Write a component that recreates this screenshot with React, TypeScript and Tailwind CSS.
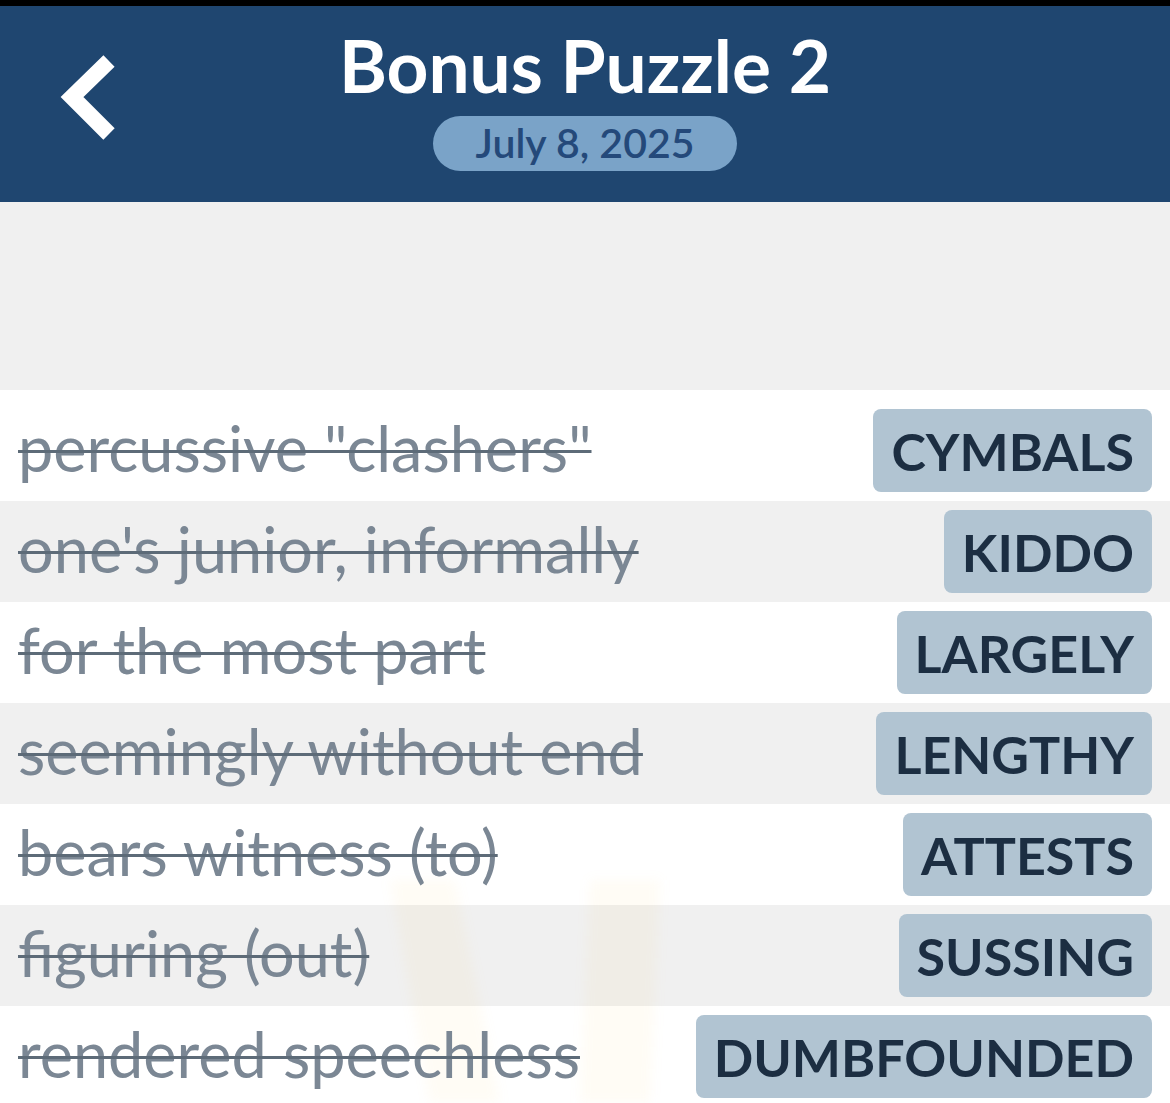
import React from "react";

const rows: { clue: string; answer: string }[] = [
  { clue: 'percussive "clashers"', answer: "CYMBALS" },
  { clue: "one's junior, informally", answer: "KIDDO" },
  { clue: "for the most part", answer: "LARGELY" },
  { clue: "seemingly without end", answer: "LENGTHY" },
  { clue: "bears witness (to)", answer: "ATTESTS" },
  { clue: "figuring (out)", answer: "SUSSING" },
  { clue: "rendered speechless", answer: "DUMBFOUNDED" },
];

export default function App() {
  return (
    <div
      className="relative w-[1170px] h-[1103px] overflow-hidden bg-white flex flex-col"
      style={{ fontFamily: "Lato, 'Open Sans', sans-serif" }}
    >
      <div className="h-[6px] bg-black shrink-0" />
      <header className="relative h-[196px] bg-[#1f4670] flex flex-col items-center shrink-0">
        <svg
          className="absolute left-[50px] top-[44px]"
          width="80"
          height="100"
          viewBox="0 0 80 100"
        >
          <path
            d="M59 11 L22 47 L59 84"
            fill="none"
            stroke="white"
            strokeWidth="16"
            strokeLinecap="butt"
            strokeLinejoin="miter"
          />
        </svg>
        <h1 className="mt-[15px] text-[73px] leading-[88px] font-bold text-white">
          Bonus Puzzle 2
        </h1>
        <div className="mt-[7px] w-[304px] h-[55px] rounded-full bg-[#7aa3c8] flex items-center justify-center text-[41px] leading-none font-semibold text-[#24497a]">
          <span className="mt-[-2px]">July 8, 2025</span>
        </div>
      </header>
      <div className="h-[188px] bg-[#f0f0f0] shrink-0" />
      <div className="pt-[10px] bg-white flex flex-col">
        {rows.map((r, i) => (
          <div
            key={r.answer}
            className={`h-[101px] flex items-start justify-between pl-[18px] pr-[18px] ${
              i % 2 === 1 ? "bg-[#f0f0f0]" : "bg-white"
            }`}
          >
            <span className="relative z-10 mt-[10px] text-[63px] leading-[76px] text-[#7b8794] line-through decoration-[#5d6b78] decoration-[3px] whitespace-nowrap">
              {r.clue}
            </span>
            <span className="relative z-10 mt-[9px] h-[83px] px-[18px] rounded-[8px] bg-[#b1c4d2] flex items-center text-[52px] leading-none font-bold text-[#1c2e42] whitespace-nowrap">
              {r.answer}
            </span>
          </div>
        ))}
      </div>
      <svg
        className="absolute left-[360px] top-[860px] pointer-events-none blur-[6px]"
        width="340"
        height="243"
        viewBox="0 0 340 243"
      >
        <polygon points="30,20 95,20 140,243 70,243" fill="#fcd34d" opacity="0.06" />
        <polygon points="230,20 300,20 290,243 220,243" fill="#fcd34d" opacity="0.06" />
      </svg>
    </div>
  );
}
